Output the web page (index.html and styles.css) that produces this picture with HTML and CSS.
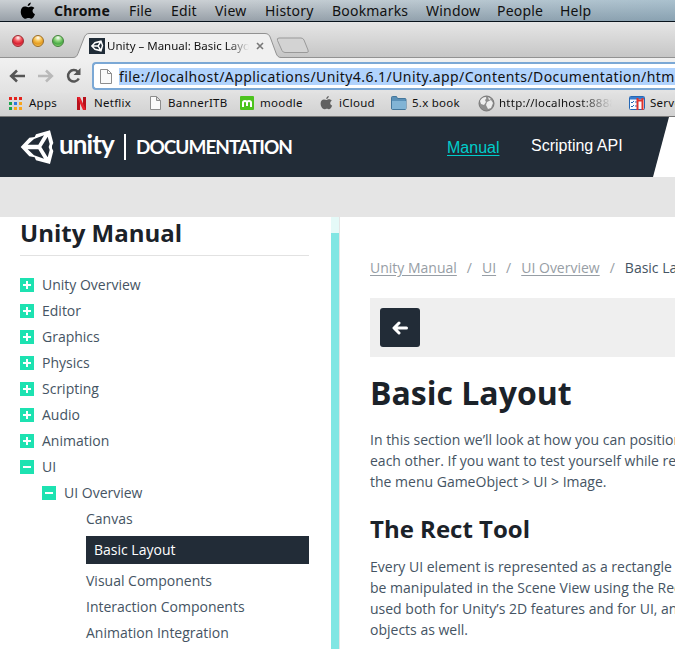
FILE: index.html
```html
<!DOCTYPE html>
<html lang="en">
<head>
<meta charset="utf-8">
<title>Unity - Manual: Basic Layout</title>
<link rel="stylesheet" href="styles.css">
</head>
<body>
<nav class="menubar">
  <svg class="apple" width="16" height="18" viewBox="0 0 17 18"><path d="M11.500 0c.1 2-1.500 3.800-3.300 3.800C8 2 9.700.200 11.500 0zM8.600 5c.8 0 1.800-.9 3.300-.9 1.500 0 2.800.8 3.400 1.800-2.900 1.700-2.400 5.300.6 6.500-.7 2-2.200 4.800-3.900 4.800-1.200 0-1.600-.7-3-.7s-1.900.7-3 .7C3.300 17.200.8 13.600.8 9.700.8 6.200 2.900 4.300 5.200 4.300 6.600 4.300 7.700 5 8.600 5z"/></svg>
  <b class="m-chrome">Chrome</b><span class="m-file">File</span><span class="m-edit">Edit</span><span class="m-view">View</span><span class="m-history">History</span><span class="m-bookmarks">Bookmarks</span><span class="m-window">Window</span><span class="m-people">People</span><span class="m-help">Help</span>
</nav>
<div class="tabstrip">
  <div class="lights"><i class="light red"></i><i class="light amber"></i><i class="light green"></i></div>
  <div class="tab">
    <svg class="tab-shape" width="210" height="26" viewBox="0 0 210 26"><path d="M0 24.500c3 0 4-1.500 5-4L11 5c1.200-3 2.500-4.500 5-4.500h176c3 0 4.500 1.500 5.500 4.500l5.500 15c1 3 2.500 4.500 5 4.500V26H0z" fill="#f0f0f0"/><path d="M0 24.500c3 0 4-1.500 5-4L11 5c1.200-3 2.500-4.500 5-4.500h176c3 0 4.500 1.500 5.500 4.500l5.500 15c1 3 2.500 4.500 5 4.500" fill="none" stroke="#929292"/></svg>
    <div class="tab-content">
      <svg class="favicon" width="16" height="16" viewBox="0 0 16 16"><path fill="#202c37" d="M0 0h16v16H0z"/><path d="M2.800 8 6 4.700l6-1.500 1.500 4.300-1.500 5.300L6 11.300zM3 8h6m0 0 3-4.500M9 8l3 4.500" fill="none" stroke="#fff" stroke-width="1.400"/></svg>
      <span class="tab-title">Unity – Manual: Basic Layout</span>
      <svg width="8" height="8" viewBox="0 0 8 8"><path d="m1 1 6 6m0-6L1 7" stroke="#777" stroke-width="1.600"/></svg>
    </div>
  </div>
  <svg class="new-tab" width="34" height="17" viewBox="0 0 34 17"><path d="M3 1h22q2 0 3 2l4 10q1 2.500-1 2.500H9q-2 0-3-2L1.500 3.500Q.6 1 3 1z" fill="#d3d3d3" stroke="#999"/></svg>
</div>
<div class="toolbar">
  <svg class="back" width="17" height="14" viewBox="0 0 17 14"><path d="M16 7H3M8 1.500 2.200 7 8 12.500" fill="none" stroke="#555" stroke-width="2.600"/></svg>
  <svg class="forward" width="17" height="14" viewBox="0 0 17 14"><path d="M1 7h13M9 1.500 14.800 7 9 12.500" fill="none" stroke="#b9b9b9" stroke-width="2.600"/></svg>
  <svg class="reload" width="17" height="16" viewBox="0 0 17 16"><path d="M13 4A5.700 5.700 0 1 0 13.800 10.500" fill="none" stroke="#555" stroke-width="2.500"/><path d="M15.500 0v7H8.500z" fill="#555"/></svg>
  <div class="address">
    <svg width="12" height="15" viewBox="0 0 12 15"><path d="M.5.500h7l4 4v10H.5zM7.500.500v4h4" fill="#fafafa" stroke="#8d8d8d"/></svg>
    <span class="url">file://localhost/Applications/Unity4.6.1/Unity.app/Contents/Documentation/html</span>
  </div>
</div>
<div class="bookmarks">
  <div class="bm bm-apps"><svg width="13" height="13" viewBox="0 0 13 13"><path fill="#e3231d" d="M0 0h3v3H0zM5 0h3v3H5zM10 0h3v3h-3z"/><path fill="#1ba34c" d="M0 5h3v3H0zM0 10h3v3H0z"/><path fill="#2f78dd" d="M5 5h3v3H5z"/><path fill="#f8a51b" d="M10 5h3v3h-3zM5 10h3v3H5zM10 10h3v3h-3z"/></svg><span>Apps</span></div>
  <div class="bm bm-netflix"><svg width="9" height="13" viewBox="0 0 9 13"><path fill="#b8101b" d="M0 0h3v13H0zM6 0h3v13H6z"/><path fill="#e8202c" d="M0 0h3l6 13H6z"/></svg><span>Netflix</span></div>
  <div class="bm bm-banner"><svg width="11" height="14" viewBox="0 0 11 14"><path d="M.5.500h6l4 4v9H.5zM6.500.500v4h4" fill="#fafafa" stroke="#8d8d8d"/></svg><span>BannerITB</span></div>
  <div class="bm bm-moodle"><svg width="14" height="14" viewBox="0 0 14 14"><rect width="14" height="14" rx="1" fill="#4cc31e"/><path d="M3 11V6.500q0-1.500 2-1.500t2 1.500V10 6.500Q7 5 9 5t2 1.500V11" fill="none" stroke="#fff" stroke-width="2"/></svg><span>moodle</span></div>
  <div class="bm bm-icloud"><svg width="13" height="14" viewBox="0 0 17 18"><path fill="#606060" d="M11.500 0c.1 2-1.500 3.800-3.300 3.800C8 2 9.700.200 11.500 0zM8.600 5c.8 0 1.800-.9 3.300-.9 1.500 0 2.800.8 3.400 1.800-2.900 1.700-2.400 5.300.6 6.500-.7 2-2.200 4.800-3.900 4.800-1.200 0-1.600-.7-3-.7s-1.900.7-3 .7C3.300 17.200.8 13.600.8 9.700.8 6.200 2.900 4.300 5.200 4.300 6.600 4.300 7.700 5 8.600 5z"/></svg><span>iCloud</span></div>
  <div class="bm bm-book"><svg width="16" height="14" viewBox="0 0 16 14"><path d="M.5 12V1.500q0-1 1-1h4l1 2h7.500q1 0 1 1V12q0 1.500-1 1.500H1.500q-1 0-1-1.500z" fill="#5b91b8" stroke="#44779c"/><path d="M1 5h14v8H1z" fill="#82b4d5"/></svg><span>5.x book</span></div>
  <div class="bm bm-local"><svg width="17" height="17" viewBox="0 0 17 17"><circle cx="8.500" cy="8.500" r="7.500" fill="#8e8e8e" stroke="#777"/><path d="M2 6q2-4 6-4 1 2-1 3l1 2-2 3-3-1zM9 7l4-2 2 3-2 5-3 1-2-4zM10 2l3 2-2 1z" fill="#eee"/></svg><span>http://localhost:8888</span></div>
  <div class="bm bm-server"><svg width="16" height="14" viewBox="0 0 16 14"><rect x=".5" y=".5" width="15" height="13" rx="1" fill="#f8faff" stroke="#2467b5"/><path d="M1 1h14v2.500H1z" fill="#397cce"/><path d="M2 6l1 1 2-2M2 10l1 1 2-2M6 6h2M6 10h2" fill="none" stroke="#2467b5"/><path d="M8.500 2v12M13.500 2v12M8.500 4.500h5" fill="none" stroke="#df342d" stroke-width="2"/></svg><span>Server</span></div>
</div>
<header class="header">
  <svg class="logo" width="34" height="36" viewBox="60 56 102 108"><path fill="#fff" fill-rule="evenodd" d="M62 110 88 82l16-2 4-8 42-12 10 38-4 8v8l4 8-10 39-42-11-4-9-16-3zM83 103h32l17-28-30 11zM83 117l19 18 30 10-17-28zM124 110l19 31 6-22-3-9 3-9-6-22z"/></svg>
  <span class="brand">unity</span>
  <i class="divider"></i>
  <span class="doc-word">DOCUMENTATION</span>
  <a class="nav-manual">Manual</a>
  <a class="nav-api">Scripting API</a>
  <i class="slant"></i>
</header>
<div class="band"></div>
<main class="content">
  <aside class="sidebar">
    <h2>Unity Manual</h2>
    <ul class="tree">
      <li><i class="toggle plus"></i>Unity Overview</li>
      <li><i class="toggle plus"></i>Editor</li>
      <li><i class="toggle plus"></i>Graphics</li>
      <li><i class="toggle plus"></i>Physics</li>
      <li><i class="toggle plus"></i>Scripting</li>
      <li><i class="toggle plus"></i>Audio</li>
      <li><i class="toggle plus"></i>Animation</li>
      <li><i class="toggle"></i>UI</li>
      <li class="level2"><i class="toggle"></i>UI Overview</li>
      <li class="level3">Canvas</li>
      <li class="level3 current">Basic Layout</li>
      <li class="level3">Visual Components</li>
      <li class="level3">Interaction Components</li>
      <li class="level3">Animation Integration</li>
    </ul>
  </aside>
  <div class="scroll"><div class="thumb"></div></div>
  <article class="article">
    <div class="crumbs"><a>Unity Manual</a><s>/</s><a>UI</a><s>/</s><a>UI Overview</a><s>/</s><span>Basic Layout</span></div>
    <div class="pager"><div class="prev"><svg width="16" height="14" viewBox="0 0 16 14"><path d="M14.500 7H3M7 2 2 7l5 5" fill="none" stroke="#fff" stroke-width="3" stroke-linecap="round" stroke-linejoin="round"/></svg></div></div>
    <h1>Basic Layout</h1>
    <p>In this section we’ll look at how you can position UI<br>each other. If you want to test yourself while reading<br>the menu GameObject &gt; UI &gt; Image.</p>
    <h2>The Rect Tool</h2>
    <p>Every UI element is represented as a rectangle for<br>be manipulated in the Scene View using the Rect Tool<br>used both for Unity’s 2D features and for UI, and<br>objects as well.</p>
  </article>
</main>
</body>
</html>
```
FILE: styles.css
```css
* { box-sizing: border-box; }
html, body { margin: 0; height: 649px; overflow: hidden; }
body { width: 675px; background: #fff; font-family: "Open Sans", sans-serif; white-space: nowrap; }
svg { display: block; flex: none; }
i, s { font-style: normal; text-decoration: none; }

.menubar { display: flex; align-items: center; height: 22px; padding-left: 20px; border-bottom: 1px solid #08131c; background: linear-gradient(to right, transparent 30%, rgba(110, 165, 195, .35)), linear-gradient(#cbd0d4, #98a0a8); font: 14px/20px "Noto Sans", sans-serif; letter-spacing: .2px; color: #111; }
.menubar > * { flex: none; }
.apple { width: 16px; margin-right: 18px; }
.m-chrome { width: 75px; }
.m-file { width: 42px; }
.m-edit { width: 44px; }
.m-view { width: 50px; }
.m-history { width: 67px; }
.m-bookmarks { width: 94px; }
.m-window { width: 71px; }
.m-people { width: 63px; }

.tabstrip { display: flex; height: 36px; background: linear-gradient(#e6e6e6, #c6c6c6); border-bottom: 1px solid #929292; }
.lights { display: flex; gap: 8px; width: 73px; padding: 13px 0 0 12px; }
.light { width: 12px; height: 12px; border-radius: 50%; border: 1px solid #666; }
.red { background: radial-gradient(circle at 50% 18%, #fff, #f65a5f 35%, #d51f31 65%, #ff8f8f); border-color: #9c2b32; }
.amber { background: radial-gradient(circle at 50% 18%, #fff, #f8c554 35%, #e39a23 65%, #ffe47a); border-color: #9c6c25; }
.green { background: radial-gradient(circle at 50% 18%, #fff, #8ad477 35%, #49a947 65%, #b5f48d); border-color: #43803c; }
.tab { display: grid; width: 205px; height: 25px; margin-top: 11px; }
.tab-shape, .tab-content { grid-area: 1 / 1; }
.tab-content { display: flex; align-items: center; padding-left: 16px; height: 25px; z-index: 1; }
.tab-title { width: 142px; margin: 0 7px 0 2px; overflow: hidden; font: 11.5px/20px "Noto Sans", sans-serif; color: #111; -webkit-mask-image: linear-gradient(to right, #000 122px, transparent); mask-image: linear-gradient(to right, #000 122px, transparent); }
.new-tab { margin: 15px 0 0 -2px; }

.toolbar { display: flex; align-items: center; height: 35px; padding-left: 9px; background: linear-gradient(#f1f1f1, #e2e2e2); }
.forward { margin-left: 11px; }
.reload { margin-left: 11px; }
.address { display: flex; align-items: center; flex: 1; min-width: 0; height: 28px; margin: 1px 0 0 10px; border: 2px solid #7ba8d5; border-right: 0; border-radius: 4px 0 0 4px; padding-left: 6px; background: #fff; overflow: hidden; }
.url { margin-left: 7px; height: 17px; background: #b1d3fd; font: 14px/17px "Noto Sans", sans-serif; letter-spacing: .43px; color: #111; }

.bookmarks { display: flex; height: 24px; padding-left: 9px; border-bottom: 1px solid #777; background: linear-gradient(#e1e1e1, #d1d1d1); font: 11.5px/20px "Noto Sans", sans-serif; letter-spacing: .25px; color: #111; overflow: hidden; }
.bm { display: flex; align-items: center; flex: none; height: 20px; gap: 7px; }
.bm-apps { width: 68px; }
.bm-netflix { width: 73px; gap: 8px; }
.bm-banner { width: 90px; }
.bm-moodle { width: 80px; gap: 6px; }
.bm-icloud { width: 71px; gap: 6px; }
.bm-book { width: 87px; gap: 5px; }
.bm-local { width: 151px; gap: 4px; }
.bm-local span { width: 113px; overflow: hidden; -webkit-mask-image: linear-gradient(to right, #000 82px, transparent); mask-image: linear-gradient(to right, #000 82px, transparent); }
.bm-server { gap: 5px; }

.header { display: flex; align-items: flex-start; height: 60px; padding-left: 20px; background: #222c37; color: #fff; }
.logo { margin-top: 12px; }
.brand { width: 70px; margin-left: 5px; font: bold 26px/30px Lato, sans-serif; margin-top: 12px; letter-spacing: -.9px; }
.divider { width: 2px; height: 26px; margin: 17px 0 0 -5px; background: #fff; }
.doc-word { flex: none; width: 321px; padding-left: 10px; margin-top: 17px; font: bold 19px/26px Lato, sans-serif; letter-spacing: -1px; }
.nav-manual { flex: none; width: 84px; margin-top: 20px; font: 16px/22px "Liberation Sans", sans-serif; color: #00cccb; text-decoration: underline; text-underline-offset: 2px; }
.nav-api { margin-top: 18px; font: 16px/22px "Liberation Sans", sans-serif; }
.slant { width: 22px; height: 60px; margin-left: auto; background: #fff; clip-path: polygon(16px 0, 100% 0, 100% 100%, 0 100%); }
.band { height: 40px; background: #e5e5e5; }

.content { display: flex; height: 432px; color: #455463; font-size: 14px; }
.sidebar { width: 331px; padding: 0 22px 0 20px; flex: none; }
.sidebar h2 { height: 39px; margin: 0 0 16px; border-bottom: 1px solid #e2e2e2; font-size: 24px; line-height: 31px; color: #1b2229; }
.tree { margin: 0; padding: 0; list-style: none; }
.tree li { display: flex; align-items: center; height: 26px; gap: 8px; line-height: 20px; }
.tree .level2 { padding-left: 22px; }
.tree .level3 { margin-left: 66px; }
.tree .current { height: 28px; margin-top: 4px; margin-bottom: 4px; padding-left: 8px; background: #222c37; color: #fff; }
.toggle { flex: none; width: 14px; height: 14px; background: linear-gradient(#fff, #fff) center / 8px 2px no-repeat #1de2b1; }
.toggle.plus { background: linear-gradient(#fff, #fff) center / 8px 2px no-repeat, linear-gradient(#fff, #fff) center / 2px 8px no-repeat #1de2b1; }
.scroll { flex: none; width: 9px; padding-top: 16px; border-right: 1px solid #e5e5e5; background: #e5faf8; }
.thumb { height: 416px; background: #81e6e3; }
.article { flex: 1; min-width: 0; padding: 41px 0 0 30px; overflow: hidden; }
.crumbs { display: flex; height: 20px; line-height: 20px; color: #455463; }
.crumbs a { color: #979ea5; text-decoration: underline; text-underline-offset: 2px; }
.crumbs s { padding: 0 10px; color: #979ea5; }
.pager { height: 59px; margin-top: 20px; padding: 10px; background: #efefef; }
.prev { display: flex; align-items: center; justify-content: center; width: 40px; height: 39px; border-radius: 3px; background: #222c37; }
.article h1 { height: 44px; margin: 14px 0 14px; font-size: 32px; line-height: 44px; color: #1b2229; }
.article h2 { margin: 20px 0 10px; font-size: 24px; line-height: 34px; color: #1b2229; }
.article p { margin: 0; line-height: 21px; }
```
